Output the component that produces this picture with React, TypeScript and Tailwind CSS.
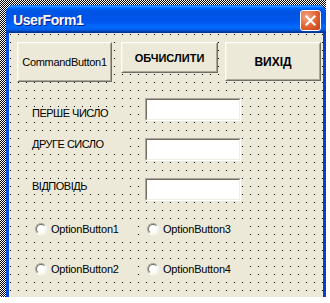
import React from "react"

const font = "font-['Liberation_Sans',Arial,sans-serif]"

interface CmdButtonProps {
  label: string
  className: string
  textClass: string
}

const CmdButton: React.FC<CmdButtonProps> = ({ label, className, textClass }) => (
  <div
    className={`shrink-0 border border-t-white border-l-white border-r-[#716F64] border-b-[#716F64] bg-[#ECE9D8] ${className}`}
  >
    <div className="flex h-full w-full items-center justify-center border border-t-[#F1EFE2] border-l-[#F1EFE2] border-r-[#ACA899] border-b-[#ACA899]">
      <span className={`${font} text-black ${textClass}`}>{label}</span>
    </div>
  </div>
)

const TextBox = () => (
  <div className="h-[23px] w-[96px] shrink-0 border border-t-[#ACA899] border-l-[#ACA899] border-r-white border-b-white">
    <div className="h-full w-full border border-t-[#716F64] border-l-[#716F64] border-r-[#F1EFE2] border-b-[#F1EFE2] bg-white" />
  </div>
)

const Option = ({ label, className = "" }: { label: string; className?: string }) => (
  <div className={`flex h-[18px] w-[104px] shrink-0 items-center bg-[#ECE9D8] pl-[5px] ${className}`}>
    <span className="block h-[12px] w-[12px] rounded-full border border-t-[#ACA899] border-l-[#ACA899] border-r-white border-b-white">
      <span className="block h-full w-full rounded-full border border-t-[#716F64] border-l-[#716F64] border-r-[#F1EFE2] border-b-[#F1EFE2] bg-white" />
    </span>
    <span className={`${font} ml-[4px] text-[11px] leading-[13px] tracking-[-0.2px] text-black`}>{label}</span>
  </div>
)

const Label = ({ text, className }: { text: string; className: string }) => (
  <div
    className={`${font} h-[13px] w-[104px] shrink-0 bg-[#ECE9D8] pl-[7px] text-[11px] leading-[13px] tracking-[-0.5px] text-black ${className}`}
  >
    {text}
  </div>
)

export default function App() {
  return (
    <div className="h-[303px] w-[330px] overflow-hidden bg-white">
      <div className="h-[297px] w-[326px] bg-[conic-gradient(#000_0_25%,#fff_0_50%,#000_0_75%,#fff_0)] bg-size-[2px_2px] pl-[6px] pt-[5px]">
        <div className="flex h-[292px] w-[320px] flex-col">
          {/* title bar */}
          <div className="flex h-[28px] shrink-0 items-start justify-between rounded-t-[7px] bg-[linear-gradient(to_bottom,#0058EE_0%,#3593FF_4%,#288EFF_6%,#127DFF_8%,#036FFC_10%,#0262EE_14%,#0057E5_20%,#0054E3_24%,#0055EB_56%,#005BF5_66%,#026AFE_76%,#0062EF_86%,#0052D6_92%,#0040AB_94%,#003092_100%)] pl-[7px] pr-[5px]">
            <span
              className={`${font} mt-[7px] text-[14px] font-bold leading-[16px] tracking-[-0.4px] text-white [text-shadow:1px_1px_0_#0A1E8C]`}
            >
              UserForm1
            </span>
            <div className="mt-[5px] flex h-[21px] w-[21px] items-center justify-center rounded-[3px] border border-white bg-[radial-gradient(circle_at_30%_30%,#F2A488,#E2612F_55%,#C43F18)]">
              <svg width="11" height="11" viewBox="0 0 11 11">
                <path d="M1.5 1.5 L9.5 9.5 M9.5 1.5 L1.5 9.5" stroke="#fff" strokeWidth="2.2" strokeLinecap="square" />
              </svg>
            </div>
          </div>

          {/* body */}
          <div className="flex-1 border-l-[3px] border-r-[3px] border-l-[#0B52E0] border-r-[#0A3FCC]">
            <div className="h-full w-full bg-[#ECE9D8] bg-[linear-gradient(to_bottom,#ECE9D8_7px,transparent_7px),linear-gradient(to_right,#000_1px,#ECE9D8_1px)] bg-size-[8px_8px] bg-position-[1px_2px]">
              {/* buttons */}
              <div className="flex items-start pl-[8px] pt-[9px]">
                <CmdButton label="CommandButton1" className="h-[40px] w-[95px]" textClass="text-[11px] tracking-[-0.3px]" />
                <CmdButton label="ОБЧИСЛИТИ" className="ml-[9px] h-[31px] w-[97px]" textClass="text-[11px] font-bold mt-[2px]" />
                <CmdButton label="ВИХІД" className="ml-[7px] h-[39px] w-[96px]" textClass="text-[12px] font-bold" />
              </div>

              {/* labels and text boxes */}
              <div className="mt-[16px] flex items-start pl-[16px]">
                <Label text="ПЕРШЕ ЧИСЛО" className="mt-[9px]" />
                <div className="ml-[16px]">
                  <TextBox />
                </div>
              </div>
              <div className="mt-[17px] flex items-start pl-[16px]">
                <Label text="ДРУГЕ СИСЛО" className="mt-0" />
                <div className="ml-[16px]">
                  <TextBox />
                </div>
              </div>
              <div className="mt-[17px] flex items-start pl-[16px]">
                <Label text="ВІДПОВІДЬ" className="mt-[2px]" />
                <div className="ml-[16px]">
                  <TextBox />
                </div>
              </div>

              {/* option buttons */}
              <div className="mt-[19px] flex pl-[21px]">
                <Option label="OptionButton1" />
                <Option label="OptionButton3" className="ml-[8px]" />
              </div>
              <div className="mt-[22px] flex pl-[21px]">
                <Option label="OptionButton2" />
                <Option label="OptionButton4" className="ml-[8px]" />
              </div>
            </div>
          </div>
        </div>
      </div>
    </div>
  )
}
